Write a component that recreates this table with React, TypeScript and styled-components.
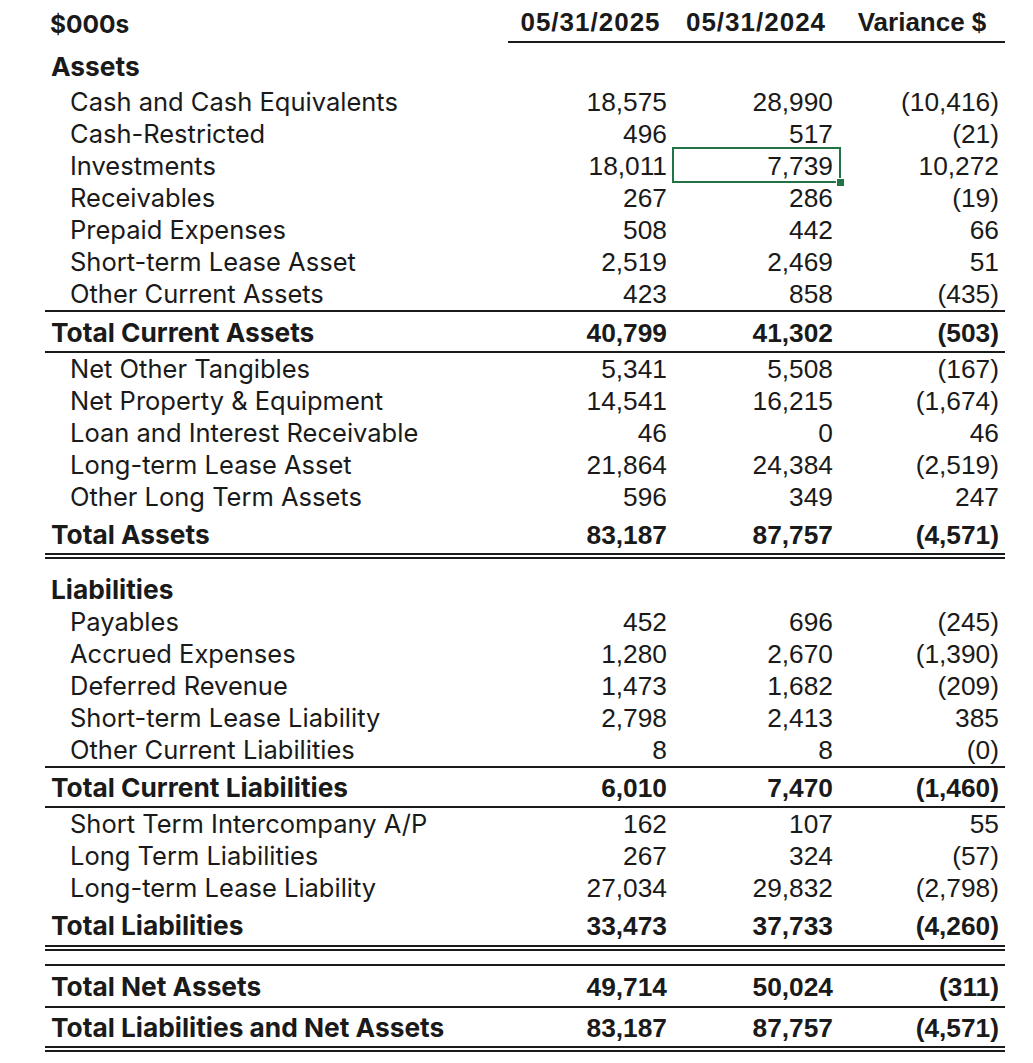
import React from "react";
import styled, { createGlobalStyle, css } from "styled-components";

const GlobalStyle = createGlobalStyle`
  html, body { margin: 0; padding: 0; background: #ffffff; }
  * { box-sizing: border-box; }
`;

type Rule = "none" | "single" | "double";

const ruleCss = (r: Rule | undefined) =>
  r === "single" ? "2px solid #1a1a1a" : r === "double" ? "6px double #1a1a1a" : "none";

const Sheet = styled.div`
  padding-left: 45px;
  width: 1005px;
`;

const Row = styled.div<{ $h: number; $pb: number; $rule?: Rule; $topRule?: boolean; $gap?: number }>`
  display: grid;
  grid-template-columns: 463px 165px 166px 166px;
  align-items: end;
  height: ${(p) => p.$h}px;
  padding-bottom: ${(p) => p.$pb}px;
  margin-top: ${(p) => p.$gap ?? 0}px;
  border-bottom: ${(p) => ruleCss(p.$rule)};
  border-top: ${(p) => (p.$topRule ? "2px solid #1a1a1a" : "none")};
`;

const Label = styled.div<{ $bold?: boolean }>`
  font-family: Inter, "Liberation Sans", sans-serif;
  font-size: ${(p) => (p.$bold ? 26.3 : 25.5)}px;
  line-height: 32px;
  color: #1a1a1a;
  white-space: nowrap;
  padding-left: ${(p) => (p.$bold ? 6 : 25)}px;
  font-weight: ${(p) => (p.$bold ? 700 : 400)};
`;

const Num = styled.div<{ $bold?: boolean; $selected?: boolean }>`
  position: relative;
  font-family: "Liberation Sans", Arial, sans-serif;
  font-size: 26.3px;
  line-height: 32px;
  color: #1a1a1a;
  text-align: right;
  padding-right: 6px;
  white-space: nowrap;
  font-weight: ${(p) => (p.$bold ? 700 : 400)};
  ${(p) =>
    p.$selected &&
    css`
      &::before {
        content: "";
        position: absolute;
        top: -3px;
        bottom: -1px;
        left: -1px;
        right: -2px;
        border: 2px solid #217346;
      }
      &::after {
        content: "";
        position: absolute;
        right: -5px;
        bottom: -4px;
        width: 7px;
        height: 7px;
        background: #217346;
        border-left: 1px solid #fff;
        border-top: 1px solid #fff;
      }
    `}
`;

const HeadRow = styled.div`
  display: grid;
  grid-template-columns: 463px 165px 166px 166px;
  height: 43px;
`;

const HeadLabel = styled.div`
  display: flex;
  align-items: flex-end;
  padding: 0 0 3px 5px;
  font-family: Inter, "Liberation Sans", sans-serif;
  font-weight: 700;
  font-size: 24.5px;
  line-height: 32px;
  color: #1a1a1a;
`;

const HeadCell = styled.div<{ $spaced?: boolean }>`
  display: flex;
  align-items: flex-end;
  justify-content: center;
  padding-bottom: 3px;
  border-bottom: 2px solid #1a1a1a;
  font-family: "Liberation Sans", Arial, sans-serif;
  font-weight: 700;
  font-size: 26px;
  line-height: 32px;
  letter-spacing: ${(p) => (p.$spaced ? "1px" : "0")};
  color: #1a1a1a;
  white-space: nowrap;
`;

type Line = {
  label: string;
  v?: [string, string, string];
  bold?: boolean;
  h?: number;
  pb?: number;
  rule?: Rule;
  topRule?: boolean;
  gap?: number;
  sel?: number;
};

const lines: Line[] = [
  { label: "Assets", bold: true, h: 43, pb: 3 },
  { label: "Cash and Cash Equivalents", v: ["18,575", "28,990", "(10,416)"] },
  { label: "Cash-Restricted", v: ["496", "517", "(21)"] },
  { label: "Investments", v: ["18,011", "7,739", "10,272"], sel: 1 },
  { label: "Receivables", v: ["267", "286", "(19)"] },
  { label: "Prepaid Expenses", v: ["508", "442", "66"] },
  { label: "Short-term Lease Asset", v: ["2,519", "2,469", "51"] },
  { label: "Other Current Assets", v: ["423", "858", "(435)"], h: 34, rule: "single" },
  { label: "Total Current Assets", v: ["40,799", "41,302", "(503)"], bold: true, h: 41, pb: 2, rule: "single" },
  { label: "Net Other Tangibles", v: ["5,341", "5,508", "(167)"] },
  { label: "Net Property & Equipment", v: ["14,541", "16,215", "(1,674)"] },
  { label: "Loan and Interest Receivable", v: ["46", "0", "46"] },
  { label: "Long-term Lease Asset", v: ["21,864", "24,384", "(2,519)"] },
  { label: "Other Long Term Assets", v: ["596", "349", "247"] },
  { label: "Total Assets", v: ["83,187", "87,757", "(4,571)"], bold: true, h: 46, pb: 2, rule: "double" },
  { label: "Liabilities", bold: true, h: 47, pb: 0 },
  { label: "Payables", v: ["452", "696", "(245)"] },
  { label: "Accrued Expenses", v: ["1,280", "2,670", "(1,390)"] },
  { label: "Deferred Revenue", v: ["1,473", "1,682", "(209)"] },
  { label: "Short-term Lease Liability", v: ["2,798", "2,413", "385"] },
  { label: "Other Current Liabilities", v: ["8", "8", "(0)"], h: 34, rule: "single" },
  { label: "Total Current Liabilities", v: ["6,010", "7,470", "(1,460)"], bold: true, h: 40, pb: 2, rule: "single" },
  { label: "Short Term Intercompany A/P", v: ["162", "107", "55"] },
  { label: "Long Term Liabilities", v: ["267", "324", "(57)"] },
  { label: "Long-term Lease Liability", v: ["27,034", "29,832", "(2,798)"] },
  { label: "Total Liabilities", v: ["33,473", "37,733", "(4,260)"], bold: true, h: 47, pb: 3, rule: "double" },
  { label: "Total Net Assets", v: ["49,714", "50,024", "(311)"], bold: true, h: 44, pb: 3, rule: "single", topRule: true, gap: 13 },
  { label: "Total Liabilities and Net Assets", v: ["83,187", "87,757", "(4,571)"], bold: true, h: 44, pb: 2, rule: "double" },
];

export default function App() {
  return (
    <>
      <GlobalStyle />
      <Sheet>
        <HeadRow>
          <HeadLabel>$000s</HeadLabel>
          <HeadCell $spaced>05/31/2025</HeadCell>
          <HeadCell $spaced>05/31/2024</HeadCell>
          <HeadCell>Variance $</HeadCell>
        </HeadRow>
        {lines.map((l, i) => (
          <Row
            key={i}
            $h={l.h ?? 32}
            $pb={l.pb ?? 0}
            $rule={l.rule}
            $topRule={l.topRule}
            $gap={l.gap}
          >
            <Label $bold={l.bold}>{l.label}</Label>
            {l.v ? (
              l.v.map((n, j) => (
                <Num key={j} $bold={l.bold} $selected={l.sel === j}>
                  {n}
                </Num>
              ))
            ) : (
              <>
                <Num />
                <Num />
                <Num />
              </>
            )}
          </Row>
        ))}
      </Sheet>
    </>
  );
}
